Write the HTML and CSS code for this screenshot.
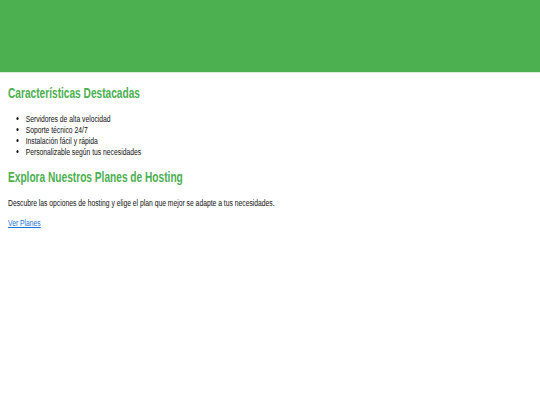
FILE: index.html
```html
<!DOCTYPE html>
<html lang="es">
<head>
<meta charset="utf-8">
<title>Hosting</title>
<link rel="stylesheet" href="styles.css">
</head>
<body>
<header class="hero"></header>
<main class="content">
  <section class="features">
    <h2 class="title">Características Destacadas</h2>
    <ul class="list">
      <li>Servidores de alta velocidad</li>
      <li>Soporte técnico 24/7</li>
      <li>Instalación fácil y rápida</li>
      <li>Personalizable según tus necesidades</li>
    </ul>
  </section>
  <section class="plans">
    <h2 class="title">Explora Nuestros Planes de Hosting</h2>
    <p class="text">Descubre las opciones de hosting y elige el plan que mejor se adapte a tus necesidades.</p>
    <a class="link" href="#">Ver Planes</a>
  </section>
</main>
</body>
</html>
```
FILE: styles.css
```css
html, body {
  margin: 0;
  padding: 0;
  background: #ffffff;
}
body {
  font-family: "Liberation Sans Narrow", "Liberation Sans", Arial, sans-serif;
  font-stretch: condensed;
  font-size: 9.6px;
  color: #111111;
}
.hero {
  height: 72px;
  background: #4caf50;
  border-bottom: 1px solid #d8ecd8;
}
.content {
  margin-left: 8px;
  width: 520px;
  transform: scaleX(0.705);
  transform-origin: 0 0;
}
.title {
  color: #4caf50;
  font-size: 14.4px;
  font-weight: bold;
  margin: 12px 0;
  white-space: nowrap;
}
.list {
  margin: 0;
  padding-left: 25px;
  line-height: 11px;
}
.text {
  margin: 12px 0 9px;
  line-height: 11px;
  white-space: nowrap;
}
.link {
  color: #1a73d9;
}
```
